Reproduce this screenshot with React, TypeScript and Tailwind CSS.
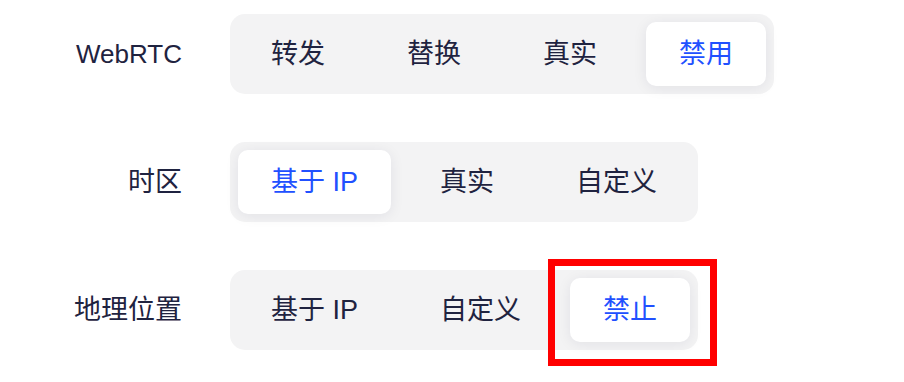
import { useState } from "react";

// 浏览器指纹设置 · 分段选择器
interface Row { label: string; options: string[]; value: string; }

const ROWS: Row[] = [
  { label: "WebRTC", options: ["转发", "替换", "真实", "禁用"], value: "禁用" },
  { label: "时区", options: ["基于 IP", "真实", "自定义"], value: "基于 IP" },
  { label: "地理位置", options: ["基于 IP", "自定义", "禁止"], value: "禁止" },
];

function Segmented({ options, value, onChange, marked }: { options: string[]; value: string; onChange: (v: string) => void; marked?: boolean }) {
  return (
    <div className="flex gap-4 rounded-[15px] bg-[#f3f3f4] p-2">
      {options.map((o) => {
        const on = o === value;
        const btn = (
          <button
            key={o}
            onClick={() => onChange(o)}
            className={
              "h-16 min-w-[120px] rounded-[10px] px-[33px] text-[27px] whitespace-nowrap " +
              (on ? "bg-white text-[#2150ff] shadow-[0_2px_14px_rgba(20,30,60,0.08)]" : "text-[#1f2340]")
            }
          >{o}</button>
        );
        // 标注框：仅给最后一行选中项
        if (marked && on) {
          return (
            <div key={o} className="relative">
              {btn}
              <div className="pointer-events-none absolute left-[-22px] right-[-27px] top-[-19px] bottom-[-24px] border-[7px] border-[#ff0000]" />
            </div>
          );
        }
        return btn;
      })}
    </div>
  );
}

export default function App() {
  const [vals, setVals] = useState(ROWS.map((r) => r.value));
  return (
    <div className="w-[904px] h-[382px] bg-white pt-[14px]" style={{ fontFamily: '"Liberation Sans", "Noto Sans CJK SC", sans-serif' }}>
      <div className="flex flex-col gap-12">
        {ROWS.map((r, i) => (
          <div key={r.label} className="flex items-center">
            <div className={"w-[184px] pr-[2px] text-right text-[#1f2340] " + (i === 0 ? "text-[26px]" : "text-[27px]")}>{r.label}</div>
            <div className="ml-[46px]">
              <Segmented options={r.options} value={vals[i]} marked={i === 2} onChange={(v) => setVals((p) => p.map((x, j) => (j === i ? v : x)))} />
            </div>
          </div>
        ))}
      </div>
    </div>
  );
}
